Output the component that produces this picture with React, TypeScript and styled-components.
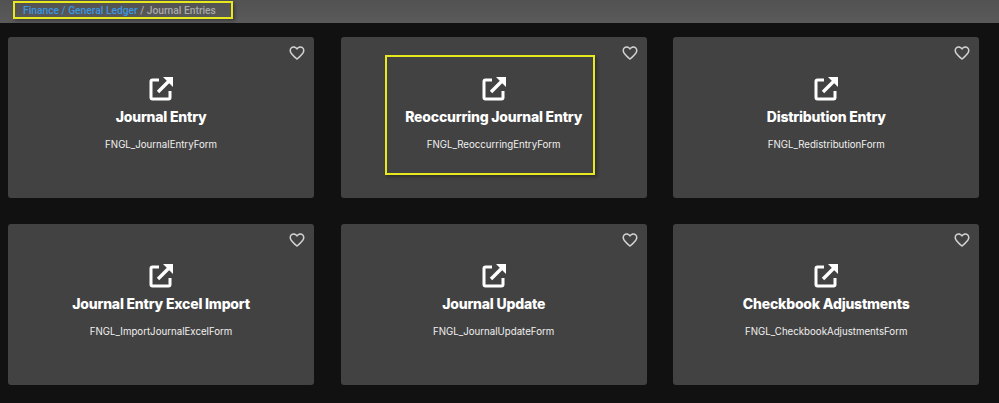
import styled, { createGlobalStyle } from "styled-components";

const GlobalStyle = createGlobalStyle`
  html, body {
    margin: 0;
    padding: 0;
    background-color: #111111;
  }
`;

const Page = styled.div`
  width: 999px;
  height: 403px;
  overflow: hidden;
  background-color: #111111;
  font-family: Inter, "Noto Sans", sans-serif;
`;

const TopBar = styled.div`
  position: relative;
  height: 23px;
  background: linear-gradient(#525252, #5a5a5a);
  padding-left: 23px;
  display: flex;
  align-items: center;
  box-sizing: border-box;
  padding-bottom: 3px;
  font-family: Roboto, sans-serif;
  font-size: 10.25px;
  font-weight: 500;
  color: #a9a9a9;
  white-space: pre;
`;

const Crumb = styled.span`
  color: #3a97e0;
`;

const Highlight = styled.div`
  position: absolute;
  box-sizing: border-box;
  border: 2px solid #e8e81e;
  pointer-events: none;
  box-shadow: 2px 2px 3px rgba(0, 0, 0, 0.3);
`;

const CrumbHighlight = styled(Highlight)`
  left: 13px;
  top: 1px;
  width: 220px;
  height: 18px;
`;

const Grid = styled.div`
  display: grid;
  grid-template-columns: repeat(3, 306.2px);
  grid-auto-rows: 161px;
  column-gap: 26.4px;
  row-gap: 26px;
  padding: 14px 0 0 8px;
`;

const Card = styled.div`
  position: relative;
  background-color: #424242;
  border-radius: 3px;
  display: flex;
  flex-direction: column;
  align-items: center;
  padding-top: 38px;
  box-sizing: border-box;
  color: #ffffff;
`;

const CardHighlight = styled(Highlight)`
  left: 44px;
  top: 18px;
  width: 210px;
  height: 120px;
`;

const HeartButton = styled.svg`
  position: absolute;
  top: 7px;
  right: 8px;
  width: 18px;
  height: 18px;
  fill: #d2d2d2;
`;

const OpenIcon = styled.svg`
  width: 28px;
  height: 28px;
  fill: none;
  stroke: #ffffff;
  stroke-width: 3;
`;

const Title = styled.div`
  margin-top: 4px;
  font-size: 14px;
  line-height: 20px;
  font-weight: 800;
  letter-spacing: -0.2px;
`;

const FormName = styled.div`
  margin-top: 11px;
  font-size: 9.7px;
  line-height: 14px;
  color: #f0f0f0;
`;

const items = [
  { title: "Journal Entry", form: "FNGL_JournalEntryForm" },
  { title: "Reoccurring Journal Entry", form: "FNGL_ReoccurringEntryForm", marked: true },
  { title: "Distribution Entry", form: "FNGL_RedistributionForm" },
  { title: "Journal Entry Excel Import", form: "FNGL_ImportJournalExcelForm" },
  { title: "Journal Update", form: "FNGL_JournalUpdateForm" },
  { title: "Checkbook Adjustments", form: "FNGL_CheckbookAdjustmentsForm" },
];

const App = () => {
  return (
    <Page>
      <GlobalStyle />
      <TopBar>
        <Crumb>Finance / General Ledger</Crumb>
        {" / Journal Entries"}
        <CrumbHighlight />
      </TopBar>
      <Grid>
        {items.map((item) => (
          <Card key={item.form}>
            <HeartButton viewBox="0 0 24 24">
              <path d="M16.5 3c-1.74 0-3.41.81-4.5 2.09C10.91 3.81 9.24 3 7.5 3 4.42 3 2 5.42 2 8.5c0 3.78 3.4 6.86 8.55 11.54L12 21.35l1.45-1.32C18.6 15.36 22 12.28 22 8.5 22 5.42 19.58 3 16.5 3zm-4.4 15.55l-.1.1-.1-.1C7.14 14.24 4 11.39 4 8.5 4 6.5 5.5 5 7.5 5c1.54 0 3.04.99 3.57 2.36h1.87C13.46 5.99 14.96 5 16.5 5c2 0 3.5 1.5 3.5 3.5 0 2.89-3.14 5.74-7.9 10.05z" />
            </HeartButton>
            <OpenIcon viewBox="0 0 28 28">
              <path d="M12 5H5.5A1.5 1.5 0 0 0 4 6.5v16A1.5 1.5 0 0 0 5.5 24h16a1.5 1.5 0 0 0 1.5-1.5V16" />
              <path d="M11 17L23 5" strokeWidth="3.4" />
              <path d="M16 2h10v10z" fill="#ffffff" stroke="none" />
            </OpenIcon>
            <Title>{item.title}</Title>
            <FormName>{item.form}</FormName>
            {item.marked && <CardHighlight />}
          </Card>
        ))}
      </Grid>
    </Page>
  );
};

export default App;
